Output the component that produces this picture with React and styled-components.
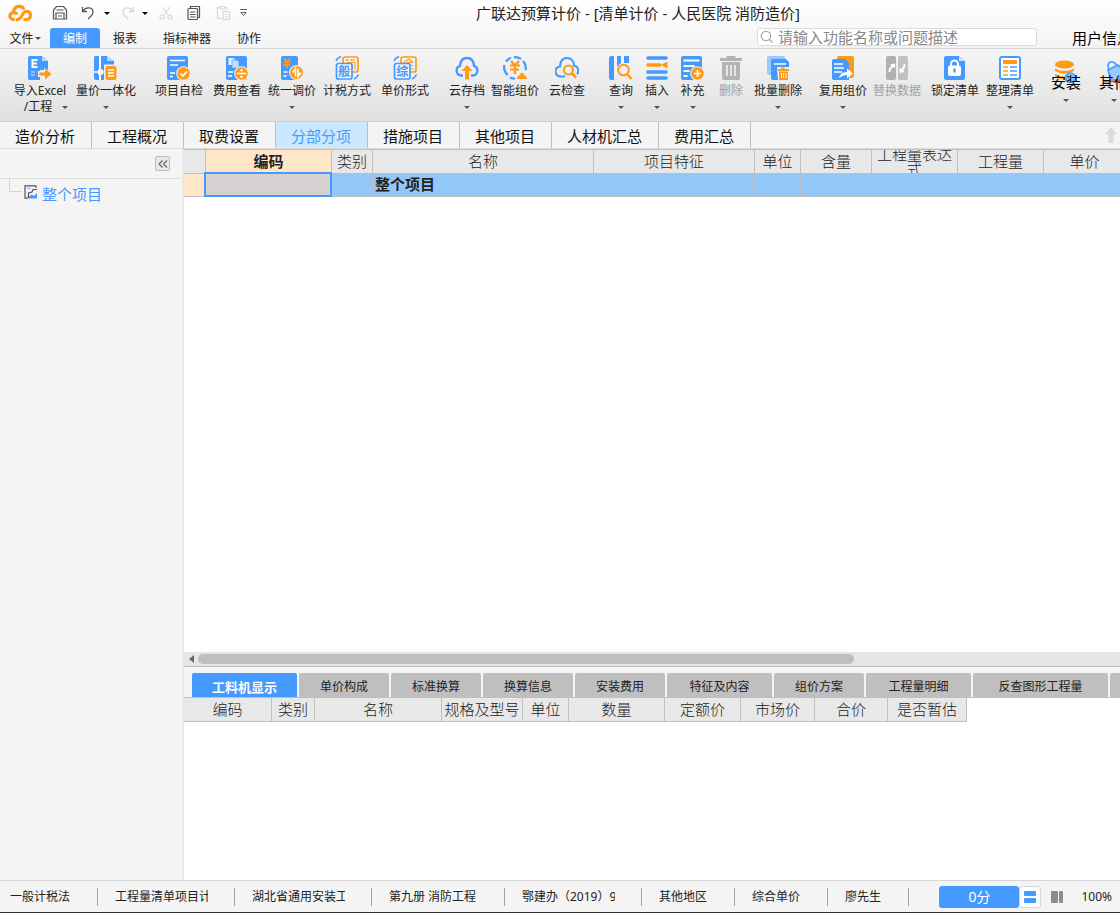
import styled, { createGlobalStyle } from "styled-components";

const B = "#459aff";
const O = "#ff9a18";

const icons = {
    excel: (
        <>
            <path d="M1.500 0H14l6 5v9h-8v10H1.500A1.500 1.500 0 0 1 0 22.500v-21A1.500 1.500 0 0 1 1.500 0z" fill={B} />
            <path d="M14 0v5h6z" fill="#b9dafb" />
            <path d="M9.500 4H4.500v7h5M4.500 7.500h4.500" fill="none" stroke="#fff" strokeWidth="2" />
            <path d="M3 16h4M3 19h4" stroke="#a9d0ff" strokeWidth="1.500" />
            <path d="M12 24v-3h-2v-6h6v-3l4 2v10z" fill="#efefef" />
            <path d="M12.500 16.500H17v-4l6.500 5.500-6.500 5.500v-4h-4.500a1.500 1.500 0 0 1 0-3z" fill={O} />
        </>
    ),
    price: (
        <>
            <path d="M1 0h4v24H2a2 2 0 0 1-2-2V1zM7 0h6l7 5v19H7z" fill={B} />
            <path d="M13 0v5h7z" fill="#b9dafb" />
            <path d="M0 16h12" stroke="#fff" strokeWidth="1.500" />
            <path d="M6 0v24" stroke="#fff" strokeWidth="1.500" />
            <rect x="4" y="13.500" width="5" height="5" fill="#fff" />
            <rect x="10" y="8.500" width="14" height="15.500" fill="#f0f0f0" />
            <rect x="11.500" y="10" width="11" height="14" rx="2" fill={O} />
            <path d="M14 14h6M14 17h6M14 20h6" stroke="#fff" strokeWidth="1.300" />
        </>
    ),
    check: (
        <>
            <rect width="21" height="24" rx="2" fill={B} />
            <path d="M3 4.500h15M3 9h8M3 17h5M3 20.500h3" stroke="#fff" strokeWidth="1.600" />
            <circle cx="16.500" cy="17.500" r="7.300" fill="#efefef" />
            <circle cx="16.500" cy="17.500" r="6.200" fill={O} />
            <path d="M13.300 17.500l2.500 2.500 4.200-4.500" fill="none" stroke="#fff" strokeWidth="1.700" />
        </>
    ),
    fee: (
        <>
            <rect x="1" width="21" height="24" rx="2" fill={B} />
            <path d="M3.500 2h5l1 1v6h-6z" fill="#e8f3ff" />
            <path d="M7 4h5l2 2v6H7z" fill="#c4e0ff" stroke={B} strokeWidth=".7" />
            <path d="M3 16h5M3 20h4" stroke="#fff" strokeWidth="1.600" />
            <circle cx="16.500" cy="17.500" r="7.300" fill="#efefef" />
            <circle cx="16.500" cy="17.500" r="6.200" fill={O} />
            <path d="M12 17.500h9" stroke="#fff" strokeWidth="1.600" />
            <circle cx="16.500" cy="14.300" r="1.200" fill="#fff" />
            <circle cx="16.500" cy="20.700" r="1.200" fill="#fff" />
        </>
    ),
    adjust: (
        <>
            <rect x="1" width="17" height="24" rx="2" fill={B} />
            <path d="M4 2.500l3 3.500 3-3.500M3.500 6.500h7M3.500 9h7M7 6v6" fill="none" stroke={O} strokeWidth="1.600" />
            <path d="M3.500 16h4M3.500 20h3" stroke="#fff" strokeWidth="1.600" />
            <circle cx="16.500" cy="16.500" r="7.500" fill="#efefef" />
            <circle cx="16.500" cy="16.500" r="6.400" fill={O} />
            <path d="M15.500 20.500v-8l-3 4M18 12.500v8l3-4" fill="none" stroke="#fff" strokeWidth="1.500" />
        </>
    ),
    tax: (
        <>
            <rect x="8" y="1" width="15" height="15" rx="2" fill="#f4f4f4" stroke={O} strokeWidth="1.700" />
            <path d="M12 3l-1 2M11.500 4h3M17 3l-1 2M16.500 4h3.500M12 6.500h8V14M17.500 8.500v4" fill="none" stroke={O} strokeWidth="1.100" />
            <rect x="1.500" y="7.500" width="15.500" height="15.500" rx="2" fill="#f4f4f4" stroke={B} strokeWidth="1.700" />
            <text x="9.200" y="19.700" fontSize="12" fontWeight="700" textAnchor="middle" fill={B}>般</text>
            <path d="M1 5q1-3 5-4.500M19 23q3-1 4.500-4.500" fill="none" stroke={B} strokeWidth="1.600" />
        </>
    ),
    form: (
        <>
            <rect x="8" y="1" width="15" height="15" rx="2" fill="#f4f4f4" stroke={O} strokeWidth="1.700" />
            <path d="M10.500 6.500L15.500 3l5 3.500M13 6.500h6M18 9.500h2.500M18 13h3" fill="none" stroke={O} strokeWidth="1.200" />
            <rect x="1.500" y="7.500" width="15.500" height="15.500" rx="2" fill="#f4f4f4" stroke={B} strokeWidth="1.700" />
            <text x="9.200" y="19.700" fontSize="12" fontWeight="700" textAnchor="middle" fill={B}>综</text>
            <path d="M1 5q1-3 5-4.500M19 23q3-1 4.500-4.500" fill="none" stroke={B} strokeWidth="1.600" />
        </>
    ),
    cloudUp: (
        <>
            <path d="M8 19.500H6a5 5 0 0 1-1-9.700C5.300 5 8 2 12 2s6.700 3 7 7.800a5 5 0 0 1-1 9.700h-2" fill="none" stroke={B} strokeWidth="2.300" />
            <path d="M12 9l5.500 6H14v8.500h-4V15H6.500z" fill={O} />
        </>
    ),
    smart: (
        <>
            <path d="M8 1.800A11 11 0 0 0 3 5.500M1.300 9a11 11 0 0 0 3.500 10M7 21.500a11 11 0 0 0 5 1.200M11 1.200A11 11 0 0 1 18 3M20 5a11 11 0 0 1 2.700 9" fill="none" stroke={B} strokeWidth="2.200" />
            <path d="M8 5l4 4.500L16 5M7 9.500h10M7 13.500h9M12 9v9" fill="none" stroke={O} strokeWidth="2.200" />
            <path d="M14 23c0-3 2-3.500 3-4 0-3 4-3 4 0 2 .5 3 2 3 4z" fill={O} />
        </>
    ),
    cloudFind: (
        <>
            <path d="M10 20.500H6a5 5 0 0 1-1-10.200C5.300 5 8 2 12 2s6.700 3 7 7.300a5.500 5.500 0 0 1 3 9" fill="none" stroke={B} strokeWidth="2.200" />
            <circle cx="13.500" cy="14" r="4.500" fill="#f2f2f2" stroke={O} strokeWidth="2.200" />
            <path d="M17 17.500l4 4" stroke={O} strokeWidth="2.600" />
        </>
    ),
    query: (
        <>
            <path d="M1.500 0H5v24H1.500L0 22.500v-21zM8 0h4v7l-4 4zM15 0h5v7h-5z" fill={B} />
            <circle cx="14.500" cy="14" r="7" fill="#f0f0f0" />
            <circle cx="14.500" cy="14" r="5.300" fill="none" stroke={O} strokeWidth="2" />
            <path d="M18 18l4.500 5" stroke={O} strokeWidth="2.500" />
        </>
    ),
    insert: (
        <>
            <path d="M3 2h18M3 16h18M3 22h18" stroke={B} strokeWidth="3.600" strokeLinecap="round" />
            <path d="M3 9h9l2.500 0" stroke={O} strokeWidth="3.600" strokeLinecap="round" />
            <path d="M15.500 9L22.500 5.500v7z" fill={O} />
        </>
    ),
    supply: (
        <>
            <rect width="21" height="24" rx="2" fill={B} />
            <path d="M2.500 4.500h16M2.500 10h11M2.500 15h6M2.500 20h4" stroke="#fff" strokeWidth="1.800" />
            <circle cx="16.500" cy="17.500" r="7.300" fill="#efefef" />
            <circle cx="16.500" cy="17.500" r="6.200" fill={O} />
            <path d="M13 17.500h7M16.500 14v7" stroke="#fff" strokeWidth="1.700" />
        </>
    ),
    trash: (
        <>
            <path d="M1 2h6l1-2h8l1 2h6v3H1zM3 6h18v16a2 2 0 0 1-2 2H5a2 2 0 0 1-2-2z" fill="#b3b3b3" />
            <path d="M8 9v11M12 9v11M16 9v11" stroke="#eee" strokeWidth="1.700" />
        </>
    ),
    batch: (
        <>
            <rect x="1" width="18" height="19" rx="2" fill="#99caff" />
            <path d="M7 3h13l3 3v18H7a2 2 0 0 1-2-2V5a2 2 0 0 1 2-2z" fill={B} />
            <path d="M8 8h12" stroke="#fff" strokeWidth="1.500" />
            <path d="M11 11h12v13H12z" fill="#efefef" />
            <path d="M12 13h3l.5-1.500h3L19 13h4v2H12zM13 15.500h9V24h-9z" fill={O} />
            <path d="M15.500 17v5M17.700 17v5M20 17v5" stroke="#fff" strokeWidth="1" />
        </>
    ),
    reuse: (
        <>
            <rect x="6" width="17" height="22" rx="2" fill={O} />
            <path d="M3 3h11l4 4v17H3a2 2 0 0 1-2-2V5a2 2 0 0 1 2-2z" fill={B} />
            <path d="M3 8h9M3 12h10M3 16h8" stroke="#fff" strokeWidth="1.600" />
            <path d="M8 22c1-4 4-6 8-6v-3.500l6 5-6 5V19c-3 0-5 1-8 3z" fill="#fff" />
        </>
    ),
    replace: (
        <>
            <rect x="1" width="10" height="24" rx="2" fill="#b1b1b1" />
            <rect x="13" width="10" height="24" rx="2" fill="#c1c1c1" />
            <path d="M3.500 16c0-3 1-5 3-6L5 8.500l5-1v5L8.500 11c-2 1-3 2.500-3 5z" fill="#fff" />
            <path d="M20.500 8c0 3-1 5-2.500 6l1.500 2-5 1v-5l1.500 1c1.500-1 2.500-2.500 2.500-5z" fill="#fff" />
        </>
    ),
    lock: (
        <>
            <path d="M3 0h13l6 5v17a2 2 0 0 1-2 2H3a2 2 0 0 1-2-2V2a2 2 0 0 1 2-2z" fill={B} />
            <path d="M16 0v5h6z" fill="#cfe6ff" />
            <rect x="5" y="9.500" width="13" height="10.500" rx="2" fill="#fff" />
            <path d="M8 10V8a3.500 3.500 0 0 1 7 0v2" fill="none" stroke="#fff" strokeWidth="2" />
            <path d="M11.500 12.500v4" stroke={B} strokeWidth="2.300" />
        </>
    ),
    list: (
        <>
            <rect x="2" y="1" width="20" height="22" rx="2" fill="#fff" stroke={B} strokeWidth="2" />
            <rect x="5" y="4" width="14" height="4" fill={O} />
            <path d="M5 11h5M5 15h5M5 19h5" stroke={O} strokeWidth="1.700" />
            <path d="M12 11h7M12 15h7M12 19h7" stroke={B} strokeWidth="1.700" />
        </>
    ),
    install: (
        <>
            <ellipse cx="10.500" cy="5.500" rx="9.500" ry="4" fill={O} />
            <path d="M1 9.500q9.500 5 19 0v2.500q-9.500 5.500-19 0zM1 15q9.500 5 19 0v2.500q-9.500 5.500-19 0z" fill={O} />
            <circle cx="16.500" cy="19" r="5" fill="#8ec2ff" stroke={B} strokeWidth="1.500" />
        </>
    ),
    other: (
        <>
            <path d="M6 11l10-5 8 8-4 7H9z" fill="#9ccaff" stroke={B} strokeWidth="1.600" />
            <path d="M7 12L6 6q1-4 5-3l4 3" fill="none" stroke={B} strokeWidth="1.600" />
            <path d="M2 22.500h22" stroke="#f2642a" strokeWidth="2" />
        </>
    ),
};

const ribbon = [
    [
        { icon: "excel", label: "导入Excel", second: "/工程", w: 64, menu: true },
        { icon: "price", label: "量价一体化", w: 68, menu: true },
    ],
    [
        { icon: "check", label: "项目自检", w: 58 },
        { icon: "fee", label: "费用查看", w: 58 },
        { icon: "adjust", label: "统一调价", w: 52, menu: true },
        { icon: "tax", label: "计税方式", w: 58 },
        { icon: "form", label: "单价形式", w: 58 },
    ],
    [
        { icon: "cloudUp", label: "云存档", w: 46, menu: true },
        { icon: "smart", label: "智能组价", w: 50 },
        { icon: "cloudFind", label: "云检查", w: 54 },
    ],
    [
        { icon: "query", label: "查询", w: 34, menu: true },
        { icon: "insert", label: "插入", w: 38, menu: true },
        { icon: "supply", label: "补充", w: 33, menu: true },
        { icon: "trash", label: "删除", w: 44, disabled: true },
        { icon: "batch", label: "批量删除", w: 50, menu: true },
    ],
    [
        { icon: "reuse", label: "复用组价", w: 60, menu: true },
        { icon: "replace", label: "替换数据", w: 48, disabled: true },
        { icon: "lock", label: "锁定清单", w: 68 },
        { icon: "list", label: "整理清单", w: 42, menu: true },
    ],
    [
        { icon: "install", label: "安装", w: 50, big: true, menu: true },
        { icon: "other", label: "其他", w: 46, big: true, menu: true },
    ],
];

const pageTabs = ["造价分析", "工程概况", "取费设置", "分部分项", "措施项目", "其他项目", "人材机汇总", "费用汇总"];

const columns = [
    ["", 22], ["编码", 126], ["类别", 41], ["名称", 221], ["项目特征", 161],
    ["单位", 46], ["含量", 71], ["工程量表达式", 86], ["工程量", 86], ["单价", 82],
];

const detailTabs = [
    ["工料机显示", 105], ["单价构成", 90], ["标准换算", 90], ["换算信息", 90], ["安装费用", 90],
    ["特征及内容", 105], ["组价方案", 90], ["工程量明细", 105], ["反查图形工程量", 135], ["", 90],
];

const detailColumns = [
    ["编码", 88], ["类别", 43], ["名称", 127], ["规格及型号", 81], ["单位", 46],
    ["数量", 96], ["定额价", 76], ["市场价", 74], ["合价", 73], ["是否暂估", 79],
];

const statusItems = [
    ["一般计税法", 98], ["工程量清单项目计价", 137], ["湖北省通用安装工程", 137], ["第九册 消防工程", 133],
    ["鄂建办（2019）93号", 137], ["其他地区", 93], ["综合单价", 93], ["廖先生", 81],
];

function Caret({ color = "#555" }) {
    return (
        <svg width="6" height="3" viewBox="0 0 6 3" aria-hidden="true">
            <path d="M0 0h6L3 3z" fill={color} />
        </svg>
    );
}

function TitleBar() {
    return (
        <TitleRow>
            <QuickBar>
                <svg width="24" height="18" viewBox="0 0 24 18" fill="none" stroke={O} strokeWidth="3.200">
                    <path d="M7 15.500H5.500a3.600 3.600 0 0 1 0-7.200c2 0 3 1 3.500 2.200" />
                    <path d="M5.500 7.500C6.500 1.500 14 .5 16 5.500" />
                    <path d="M8 15.500c5 1 5.500-4 7.500-6.500 2.500-3 7-1.500 7 2.200 0 3-2 4.300-4.500 4.300h-2.500" />
                </svg>
                <Quick $left={20} aria-label="保存">
                    <svg width="16" height="16" viewBox="0 0 16 16" fill="none" stroke="#555" strokeWidth="1.200">
                        <path d="M1.500 14V5L4.500 1.500h7L14.500 5v9zM4 14V8h8v6M4.500 5h7M6 11h4" />
                    </svg>
                </Quick>
                <Quick $left={13} aria-label="撤销">
                    <svg width="14" height="16" viewBox="0 0 14 16" fill="none" stroke="#555" strokeWidth="1.300">
                        <path d="M1.500 2v4.500H6M2 6C5 1.500 12 2 12 7c0 3-3 5-5 7" />
                    </svg>
                </Quick>
                <Quick $left={9} aria-label="撤销列表"><Caret color="#000" /></Quick>
                <Quick $left={11} aria-label="恢复">
                    <svg width="14" height="16" viewBox="0 0 14 16" fill="none" stroke="#d8d8d8" strokeWidth="1.300">
                        <path d="M12.500 2v4.500H8M12 6C9 1.500 2 2 2 7c0 3 3 5 5 7" />
                    </svg>
                </Quick>
                <Quick $left={7} aria-label="恢复列表"><Caret color="#000" /></Quick>
                <Quick $left={11} aria-label="剪切">
                    <svg width="14" height="16" viewBox="0 0 14 16" fill="none" stroke="#d8d8d8" strokeWidth="1.200">
                        <path d="M3 2l7 9M11 2l-7 9" />
                        <circle cx="3" cy="12" r="2" />
                        <circle cx="11" cy="12" r="2" />
                    </svg>
                </Quick>
                <Quick $left={14} aria-label="复制">
                    <svg width="14" height="16" viewBox="0 0 14 16" fill="none" stroke="#555" strokeWidth="1.200">
                        <path d="M3.500 3V1.500h9v11H11" />
                        <rect x="1" y="3.500" width="9.500" height="11" rx="1" />
                        <path d="M3 7h5.500M3 9.500h5.500M3 12h5.500" />
                    </svg>
                </Quick>
                <Quick $left={15} aria-label="粘贴">
                    <svg width="15" height="16" viewBox="0 0 15 16" fill="none" stroke="#d8d8d8" strokeWidth="1.200">
                        <path d="M6 13.500H1.500v-11H4M8.500 2.500H11V5M4 1.500h4.500v2.500H4z" />
                        <rect x="7" y="6.500" width="6.500" height="8" />
                        <path d="M9 9.500h3M9 12h3" />
                    </svg>
                </Quick>
                <Quick $left={9} aria-label="更多">
                    <svg width="7" height="8" viewBox="0 0 7 8">
                        <path d="M0 .5h7M.8 3.500h5.400L3.500 6.500z" fill="none" stroke="#666" />
                    </svg>
                </Quick>
            </QuickBar>
            <Title>广联达预算计价 - [清单计价 - 人民医院 消防造价]</Title>
        </TitleRow>
    );
}

function MenuBar() {
    return (
        <MenuRow>
            <Menu>
                <MenuButton $w={50}>文件<Caret /></MenuButton>
                <MenuButton $w={50} $active>编制</MenuButton>
                <MenuButton $w={50}>报表</MenuButton>
                <MenuButton $w={74}>指标神器</MenuButton>
                <MenuButton $w={50}>协作</MenuButton>
            </Menu>
            <Search>
                <svg width="14" height="14" viewBox="0 0 14 14" fill="none" stroke="#aaa" strokeWidth="1.300">
                    <circle cx="6" cy="6" r="4.700" />
                    <path d="M9.500 9.500l3 3" />
                </svg>
                <input type="text" aria-label="搜索" placeholder="请输入功能名称或问题描述" />
            </Search>
            <User href="#user">用户信息</User>
        </MenuRow>
    );
}

function Tool({ item }) {
    return (
        <ToolButton $w={item.w} $big={item.big} disabled={item.disabled}>
            <svg width="24" height="24" viewBox="0 0 24 24" aria-hidden="true">{icons[item.icon]}</svg>
            <ToolLabel $big={item.big}>{item.label}</ToolLabel>
            <ToolFoot $split={item.second}>
                {item.second}
                {item.menu && <Caret />}
            </ToolFoot>
        </ToolButton>
    );
}

function Sidebar() {
    return (
        <Side>
            <SideHead>
                <Collapse aria-label="收起">
                    <svg width="10" height="8" viewBox="0 0 10 8" fill="none" stroke="#666" strokeWidth="1.200">
                        <path d="M4.500 .5L1 4l3.500 3.500M9 .5L5.500 4 9 7.500" />
                    </svg>
                </Collapse>
            </SideHead>
            <Tree>
                <Branch />
                <svg width="14" height="14" viewBox="0 0 14 14" fill="none" stroke="#555" strokeWidth="1.200">
                    <path d="M12 3V.8H1v12.400h3" />
                    <path d="M3 3.500h4" stroke="#8ec2ff" />
                    <path d="M4.500 13V8L8 7l1-2.500h4" />
                    <path d="M5 13.500v-2l3-2 2 1.500 3-3v5.500z" fill={B} stroke="none" />
                </svg>
                <a href="#project">整个项目</a>
            </Tree>
        </Side>
    );
}

function MainGrid() {
    return (
        <GridArea>
            <Grid $framed>
                <colgroup>
                    {columns.map(([name, w]) => <Col key={name} $w={w} />)}
                </colgroup>
                <thead>
                    <tr>
                        {columns.map(([name]) => (
                            <HeadCell key={name} $current={name === "编码"}>
                                <div>{name}</div>
                            </HeadCell>
                        ))}
                    </tr>
                </thead>
                <tbody>
                    <tr>
                        {columns.map(([name]) => (
                            <Cell key={name} $marker={name === ""} $selected={name === "编码"}>
                                {name === "名称" ? "整个项目" : ""}
                            </Cell>
                        ))}
                    </tr>
                </tbody>
            </Grid>
        </GridArea>
    );
}

function Detail() {
    return (
        <DetailPane>
            <DetailTabs>
                {detailTabs.map(([name, w], i) => (
                    <DetailTab key={name} $w={w} $active={i === 0} aria-label={name || "更多"}>{name}</DetailTab>
                ))}
            </DetailTabs>
            <DetailBody>
                <Grid>
                    <colgroup>
                        {detailColumns.map(([name, w]) => <Col key={name} $w={w} />)}
                    </colgroup>
                    <thead>
                        <tr>
                            {detailColumns.map(([name]) => (
                                <HeadCell key={name}><div>{name}</div></HeadCell>
                            ))}
                        </tr>
                    </thead>
                </Grid>
            </DetailBody>
        </DetailPane>
    );
}

function StatusBar() {
    return (
        <Status>
            {statusItems.map(([text, w], i) => (
                <StatusItem key={text} $w={w} $first={i === 0}><span>{text}</span></StatusItem>
            ))}
            <StatusTools>
                <Score>0分</Score>
                <ViewButton $on aria-label="上下布局">
                    <svg width="12" height="14" viewBox="0 0 12 14" fill={B}>
                        <rect y="1" width="12" height="5" rx="1" />
                        <rect y="8" width="12" height="5" rx="1" />
                    </svg>
                </ViewButton>
                <ViewButton aria-label="左右布局">
                    <svg width="12" height="12" viewBox="0 0 12 12" fill="#8c8c8c">
                        <rect width="7" height="12" rx="1" />
                        <rect x="8" width="4" height="12" rx="1" />
                    </svg>
                </ViewButton>
                <Zoom>100%</Zoom>
            </StatusTools>
        </Status>
    );
}

export default function App() {
    return (
        <Window>
            <GlobalStyle />
            <Top>
                <TitleBar />
                <MenuBar />
            </Top>
            <Ribbon>
                {ribbon.map((group, i) => (
                    <Group key={i}>
                        {group.map((item) => <Tool key={item.label} item={item} />)}
                    </Group>
                ))}
            </Ribbon>
            <PageTabs>
                {pageTabs.map((name) => (
                    <PageTab key={name} $active={name === "分部分项"}>{name}</PageTab>
                ))}
                <Spacer />
                <svg width="12" height="16" viewBox="0 0 12 16">
                    <path d="M6 0l6 7.500H8.500V16h-5V7.500H0z" fill="#dadada" />
                </svg>
            </PageTabs>
            <Body>
                <Sidebar />
                <Work>
                    <MainGrid />
                    <ScrollBar>
                        <svg width="5" height="8" viewBox="0 0 5 8"><path d="M5 0v8L0 4z" fill="#666" /></svg>
                        <Thumb />
                    </ScrollBar>
                    <Detail />
                </Work>
            </Body>
            <StatusBar />
        </Window>
    );
}

const GlobalStyle = createGlobalStyle`
*{
    box-sizing:border-box;
}
body{
    margin:0;
    color:#222;
    font-family:"Noto Sans", "Noto Sans CJK SC", sans-serif;
    font-size:12px;
}
button, input{
    margin:0;
    padding:0;
    border:0;
    background:none;
    color:inherit;
    font:inherit;
}
svg{
    display:block;
    flex:none;
}
a{
    text-decoration:none;
}
`;

const Window = styled.div`
display:flex;
flex-direction:column;
height:100vh;
overflow:hidden;
background:#f4f4f4;
border-bottom:1px solid #2b303a;
`;

const Top = styled.header`
background:linear-gradient(#fff, #f3f3f3);
border-bottom:1px solid #d6d6d6;
`;

const TitleRow = styled.div`
display:flex;
align-items:center;
height:26px;
`;

const QuickBar = styled.div`
display:flex;
align-items:center;
flex:0 0 476px;
padding-left:8px;
`;

const Quick = styled.button`
display:flex;
margin-left:${(p) => p.$left}px;
`;

const Title = styled.h1`
margin:0;
font-size:15px;
font-weight:400;
line-height:26px;
white-space:nowrap;
`;

const MenuRow = styled.div`
display:flex;
height:22px;
`;

const Menu = styled.nav`
display:flex;
flex:1;
padding-top:2px;
`;

const MenuButton = styled.button`
display:flex;
align-items:center;
justify-content:center;
width:${(p) => p.$w}px;
gap:1px;
border-radius:3px 3px 0 0;
background:${(p) => (p.$active ? B : "transparent")};
color:${(p) => (p.$active ? "#fff" : "inherit")};
`;

const Search = styled.label`
display:flex;
align-items:center;
gap:4px;
flex:0 0 280px;
height:18px;
margin-top:2px;
padding:0 2px;
border:1px solid #dcdcdc;
border-radius:3px;
background:#fff;

>input{
    flex:1;
    height:16px;
    font-size:15px;
    line-height:16px;
    outline:0;
}
>input::placeholder{
    color:#888;
    opacity:1;
}
`;

const User = styled.a`
flex:0 0 83px;
padding-left:35px;
overflow:hidden;
color:#000;
font-size:15px;
line-height:24px;
white-space:nowrap;
`;

const Ribbon = styled.div`
display:flex;
gap:10px;
height:73px;
padding-left:8px;
overflow:hidden;
background:linear-gradient(#f5f5f5, #e0e0e0);
border-bottom:1px solid #cdcdcd;
`;

const Group = styled.div`
display:flex;
flex:none;
`;

const ToolButton = styled.button`
display:flex;
flex-direction:column;
align-items:center;
width:${(p) => p.$w}px;
padding-top:${(p) => (p.$big ? 10 : 7)}px;
color:${(p) => (p.disabled ? "#a0a0a0" : "#222")};
white-space:nowrap;
`;

const ToolLabel = styled.span`
position:relative;
margin-top:${(p) => (p.$big ? -11 : 3)}px;
color:${(p) => (p.$big ? "#000" : "inherit")};
font-size:${(p) => (p.$big ? 15 : 12)}px;
line-height:${(p) => (p.$big ? 20 : 16)}px;
`;

const ToolFoot = styled.span`
display:flex;
align-items:center;
gap:10px;
height:16px;
padding-left:${(p) => (p.$split ? 12 : 0)}px;
line-height:16px;
`;

const PageTabs = styled.nav`
display:flex;
height:27px;
padding-right:3px;
align-items:center;
border-bottom:1px solid #dcdcdc;
`;

const PageTab = styled.button`
height:26px;
padding:2px 16px 0 15px;
border-right:1px solid #bfbfbf;
background:${(p) => (p.$active ? "#cce8ff" : "transparent")};
color:${(p) => (p.$active ? B : "#111")};
font-size:15px;
line-height:24px;
white-space:nowrap;
`;

const Spacer = styled.div`
flex:1;
`;

const Body = styled.div`
display:flex;
flex:1;
min-height:0;
`;

const Side = styled.aside`
flex:0 0 184px;
border-right:2px solid #e8e8e8;
`;

const SideHead = styled.div`
display:flex;
justify-content:flex-end;
height:30px;
margin-right:2px;
padding:7px 10px 0 0;
border-bottom:1px solid #dcdcdc;
`;

const Collapse = styled.button`
display:flex;
align-items:center;
justify-content:center;
width:15px;
height:15px;
border:1px solid #bbb;
border-radius:2px;
background:#e8e8e8;
`;

const Tree = styled.div`
display:flex;
align-items:center;
height:26px;
padding-left:9px;

>a{
    padding:4px 0 0 4px;
    color:${B};
    font-size:15px;
    line-height:20px;
}
`;

const Branch = styled.span`
align-self:flex-start;
width:13px;
height:13px;
margin-right:2px;
border:solid #fbcf94;
border-width:0 0 1px 1px;
`;

const Work = styled.main`
display:flex;
flex:1;
flex-direction:column;
min-width:0;
`;

const GridArea = styled.div`
flex:1;
min-height:0;
overflow:hidden;
background:#fff;
`;

const Grid = styled.table`
width:0;
table-layout:fixed;
border-spacing:0;
border-top:${(p) => (p.$framed ? "1px solid #bfbfbf" : "0")};
color:#222;
font-size:15px;
`;

const Col = styled.col`
width:${(p) => p.$w}px;
`;

const HeadCell = styled.th`
height:24px;
padding:0;
border-right:1px solid #bfbfbf;
border-bottom:1px solid #bfbfbf;
background:${(p) => (p.$current ? "#ffe6c8" : "#e8e8e8")};
font-weight:${(p) => (p.$current ? 700 : 300)};

>div{
    display:flex;
    align-items:center;
    justify-content:center;
    height:23px;
    overflow:hidden;
    line-height:15px;
}
`;

const Cell = styled.td`
position:relative;
height:23px;
padding:0 0 2px 2px;
border-right:1px solid #bfbfbf;
border-bottom:1px solid #bfbfbf;
background:${(p) => (p.$marker ? "#ffe6c8" : p.$selected ? "#d7d1d1" : "#91c8f7")};
font-weight:700;
line-height:20px;
white-space:nowrap;

&::after{
    content:"";
    display:${(p) => (p.$selected ? "block" : "none")};
    position:absolute;
    inset:-2px -1px -1px -2px;
    border:2px solid ${B};
}
`;

const ScrollBar = styled.div`
display:flex;
align-items:center;
gap:4px;
height:15px;
padding-left:5px;
border-bottom:1px solid #bfbfbf;
background:#e6e6e6;
`;

const Thumb = styled.div`
flex:1;
height:10px;
margin-right:266px;
border-radius:5px;
background:#bfbfbf;
`;

const DetailPane = styled.section`
flex:0 0 213px;
display:flex;
flex-direction:column;
`;

const DetailTabs = styled.div`
display:flex;
gap:2px;
padding:6px 0 0 8px;
overflow:hidden;
border-bottom:1px solid #bfbfbf;
`;

const DetailTab = styled.button`
flex:0 0 ${(p) => p.$w}px;
height:24px;
padding-top:2px;
border-radius:2px 2px 0 0;
background:${(p) => (p.$active ? B : "#bfbfbf")};
color:${(p) => (p.$active ? "#fff" : "#222")};
font-size:${(p) => (p.$active ? 13 : 12)}px;
font-weight:${(p) => (p.$active ? 700 : 400)};
`;

const DetailBody = styled.div`
flex:1;
background:#fff;
`;

const Status = styled.footer`
display:flex;
align-items:center;
flex:0 0 32px;
border-top:1px solid #d6d6d6;
`;

const StatusItem = styled.div`
flex:0 0 ${(p) => p.$w}px;
min-width:0;
height:18px;
padding:0 ${(p) => (p.$first ? "26px 0 10px" : "26px 0 17px")};
border-right:1px solid #9aa3b0;
line-height:18px;
white-space:nowrap;

>span{
    display:block;
    overflow:hidden;
}
`;

const StatusTools = styled.div`
display:flex;
align-items:center;
flex:1;
justify-content:flex-end;
padding-right:8px;
`;

const Score = styled.button`
width:80px;
height:22px;
border-radius:3px;
background:${B};
color:#fff;
font-size:14px;
line-height:22px;
`;

const ViewButton = styled.button`
display:flex;
align-items:center;
justify-content:center;
width:${(p) => (p.$on ? 22 : 32)}px;
height:22px;
border:1px solid ${(p) => (p.$on ? "#d6d6d6" : "transparent")};
border-radius:3px;
background:${(p) => (p.$on ? "#fff" : "transparent")};
`;

const Zoom = styled.span`
margin-left:8px;
`;
